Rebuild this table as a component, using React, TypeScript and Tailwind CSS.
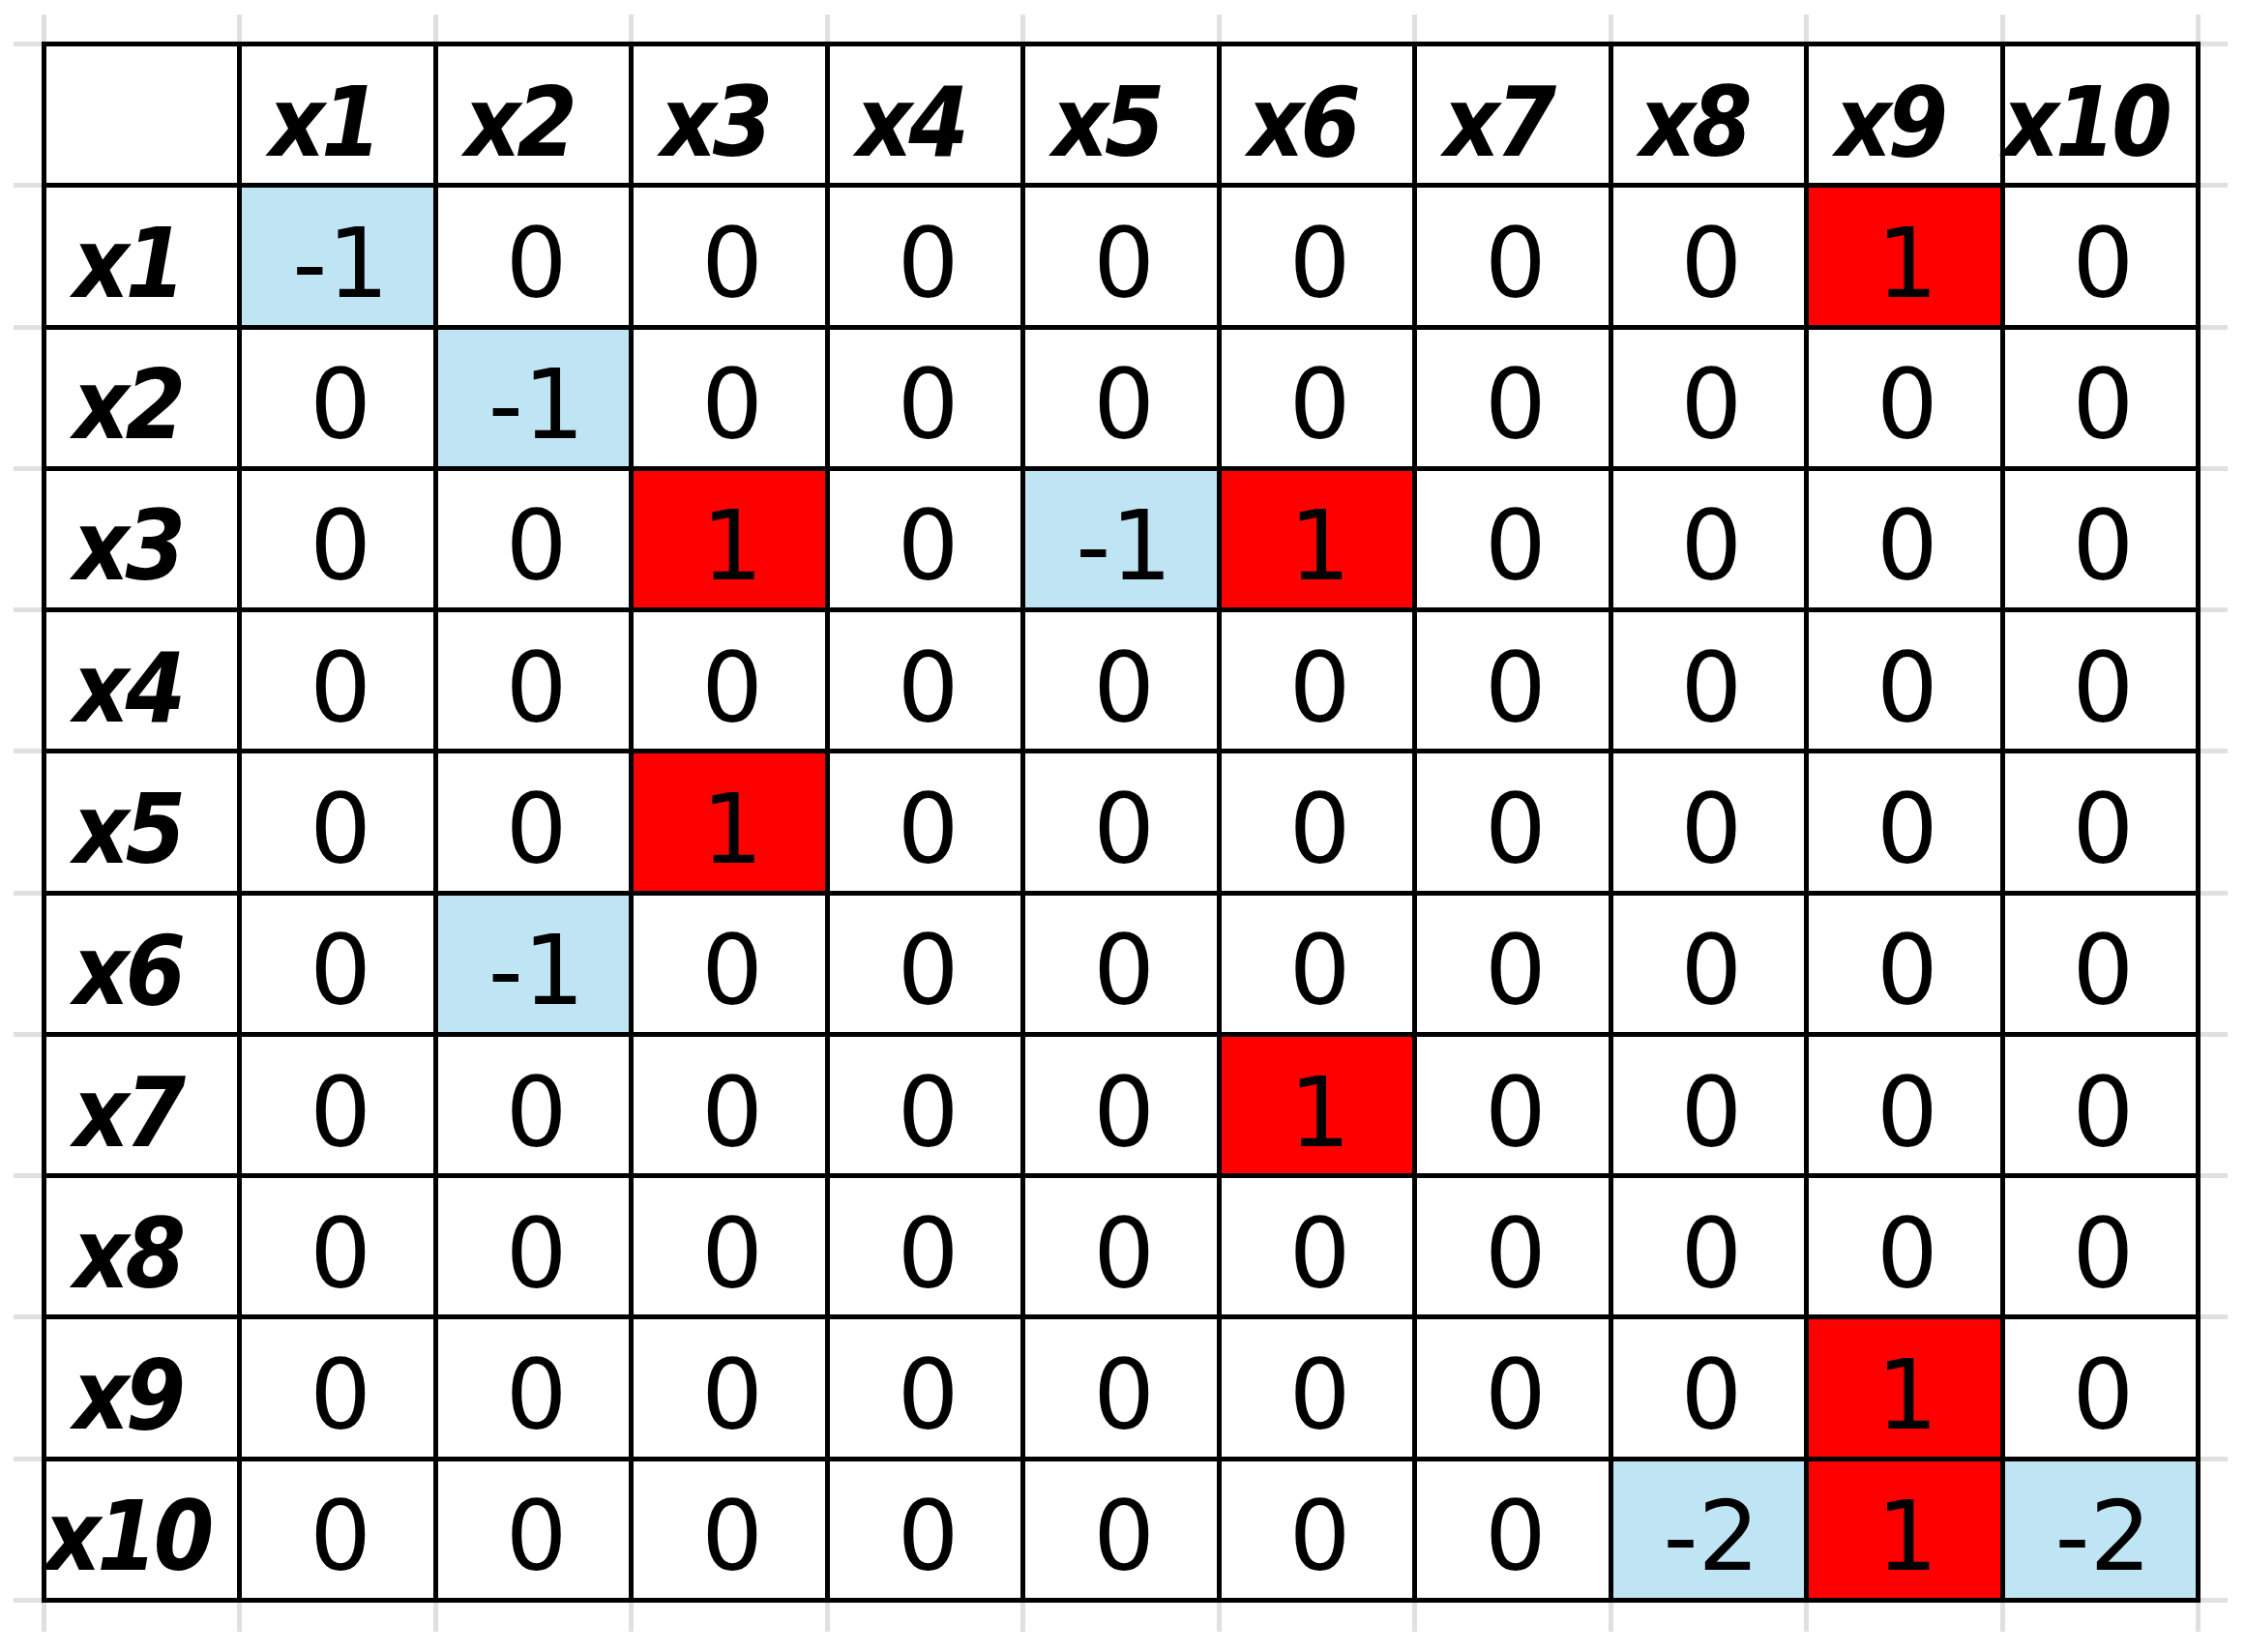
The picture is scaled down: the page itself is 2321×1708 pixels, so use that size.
const labels = ['x1', 'x2', 'x3', 'x4', 'x5', 'x6', 'x7', 'x8', 'x9', 'x10'];

const matrix: number[][] = [
  [-1, 0, 0, 0, 0, 0, 0, 0, 1, 0],
  [0, -1, 0, 0, 0, 0, 0, 0, 0, 0],
  [0, 0, 1, 0, -1, 1, 0, 0, 0, 0],
  [0, 0, 0, 0, 0, 0, 0, 0, 0, 0],
  [0, 0, 1, 0, 0, 0, 0, 0, 0, 0],
  [0, -1, 0, 0, 0, 0, 0, 0, 0, 0],
  [0, 0, 0, 0, 0, 1, 0, 0, 0, 0],
  [0, 0, 0, 0, 0, 0, 0, 0, 0, 0],
  [0, 0, 0, 0, 0, 0, 0, 0, 1, 0],
  [0, 0, 0, 0, 0, 0, 0, -2, 1, -2],
];

const font = "font-['DejaVu_Sans',sans-serif] text-[100px] leading-none text-black";

const cellBg = (v: number) => {
  if (v > 0) return 'bg-[#ff0000]';
  if (v < 0) return 'bg-[#bfe4f3]';
  return 'bg-white';
};

const Label = ({ text }: { text: string }) => (
  <div className={`flex items-center justify-center bg-white pt-[16px] pr-[30px] ${font}`}>
    <span className="font-stretch-condensed font-bold italic tracking-[-4px]">{text}</span>
  </div>
);

const Value = ({ v }: { v: number }) => (
  <div className={`flex items-center justify-center pt-[16px] pl-[6px] ${cellBg(v)} ${font}`}>
    {v}
  </div>
);

const Stubs = ({ vertical }: { vertical?: boolean }) => (
  <div
    className={
      vertical
        ? 'grid h-[1614px] grid-rows-11 gap-y-[5px] bg-[#e0e0e0] py-[5px]'
        : 'grid w-[2232px] grid-cols-11 gap-x-[5px] bg-[#e0e0e0] px-[5px]'
    }
  >
    {Array.from({ length: 11 }).map((_, i) => (
      <div key={i} className="bg-white" />
    ))}
  </div>
);

export default function App() {
  return (
    <div className="h-[1708px] w-[2321px] overflow-hidden bg-white pt-[15px] pl-[14px]">
      <div className="flex flex-col">
        <div className="flex h-[28px]">
          <div className="w-[29px]" />
          <Stubs />
        </div>

        <div className="flex">
          <div className="flex w-[29px] flex-col">
            <Stubs vertical />
          </div>

          <div className="grid h-[1614px] w-[2232px] grid-cols-11 grid-rows-11 gap-[5px] bg-black p-[5px]">
            <div className="bg-white" />
            {labels.map((l) => (
              <Label key={'h' + l} text={l} />
            ))}
            {matrix.map((row, r) => [
              <Label key={'r' + r} text={labels[r]} />,
              ...row.map((v, c) => <Value key={r + '-' + c} v={v} />),
            ])}
          </div>

          <div className="flex w-[28px] flex-col">
            <Stubs vertical />
          </div>
        </div>

        <div className="flex h-[30px]">
          <div className="w-[29px]" />
          <Stubs />
        </div>
      </div>
    </div>
  );
}
